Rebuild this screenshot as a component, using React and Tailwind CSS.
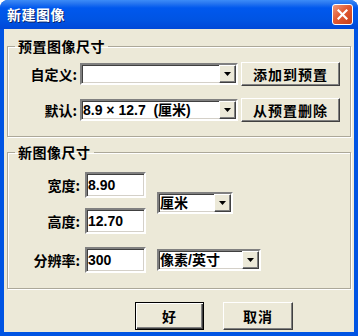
const cjk = { fontFamily: '"Noto Sans CJK SC", "Liberation Sans", sans-serif' };
const latin = { fontFamily: '"Liberation Sans", "Noto Sans CJK SC", sans-serif' };

const sunken =
  'border-2 border-t-[#808080] border-l-[#808080] border-b-white border-r-white shadow-[inset_1px_1px_0_#404040,inset_-1px_-1px_0_#D4D0C8] bg-white';
const raised =
  'border border-t-white border-l-white border-b-[#404040] border-r-[#404040] shadow-[inset_-1px_-1px_0_#808080] bg-[#ECE9D8]';

const Arrow = () => (
  <div className={`w-[17px] h-full flex items-center justify-center ${raised}`}>
    <svg width="7" height="4" viewBox="0 0 7 4">
      <path d="M0 0h7L3.5 4z" fill="#000" />
    </svg>
  </div>
);

const Combo = ({ w, text }) => (
  <div className={`${sunken} h-[22px] flex items-stretch`} style={{ width: w }}>
    <div className="flex-1 flex items-center pl-[1px] text-[14px] font-bold text-black whitespace-pre overflow-hidden" style={latin}>
      {text}
    </div>
    <Arrow />
  </div>
);

const Button = ({ children, w, h, def }) => (
  <button
    className={`flex items-center justify-center text-[14px] font-bold tracking-[1px] text-black ${
      def
        ? 'border border-black bg-[#ECE9D8] shadow-[inset_1px_1px_0_#fff,inset_-1px_-1px_0_#404040,inset_-2px_-2px_0_#808080]'
        : raised
    }`}
    style={{ width: w, height: h, ...cjk }}
  >
    {children}
  </button>
);

const Group = ({ title, children, className }) => (
  <fieldset className={`border border-[#ACA899] shadow-[inset_1px_1px_0_#fff,1px_1px_0_#fff] ${className}`}>
    <legend className="ml-[7px] px-[3px] text-[14px] leading-[18px] font-bold tracking-[0.5px] text-black" style={cjk}>
      {title}
    </legend>
    {children}
  </fieldset>
);

const Field = ({ label, value }) => (
  <div className="flex items-center">
    <span className="w-[77px] pr-[5px] text-right text-[14px] font-bold text-black" style={cjk}>
      {label}
    </span>
    <div className={`${sunken} w-[61px] h-[26px] flex items-center pl-[1px] text-[14px] font-bold text-black`} style={latin}>
      {value}
    </div>
  </div>
);

export default function App() {
  return (
    <div className="w-[358px] h-[336px] flex flex-col rounded-t-[8px] overflow-hidden bg-[#0054E3]">
      <div className="h-[29px] flex items-center justify-between pl-[7px] pr-[5px] bg-[linear-gradient(180deg,#3C8CF8_0px,#2A78F0_3px,#0058EE_8px,#0054E3_20px,#0048D8_29px)]">
        <span className="text-[14px] font-bold text-white tracking-[0.5px] [text-shadow:1px_1px_0_#0A246A]" style={cjk}>
          新建图像
        </span>
        <div className="w-[21px] h-[21px] rounded-[3px] border border-white bg-[linear-gradient(135deg,#F09A7C,#E25A33_45%,#C8401A)] flex items-center justify-center">
          <svg width="11" height="11" viewBox="0 0 11 11">
            <path d="M1.5 1.5l8 8M9.5 1.5l-8 8" stroke="#fff" strokeWidth="2.2" strokeLinecap="square" />
          </svg>
        </div>
      </div>

      <div className="flex-1 mx-[4px] mb-[4px] bg-[#ECE9D8] flex flex-col px-[3px]">
        <Group title="预置图像尺寸" className="mt-[8px] pt-[7px] pb-[14px]">
          <div className="flex flex-col gap-[12px]">
            <div className="flex items-center">
              <span className="w-[70px] pr-[1px] text-right text-[14px] font-bold text-black" style={cjk}>
                自定义:
              </span>
              <div className="ml-[2px]"><Combo w={158} text="" /></div>
              <div className="ml-[3px]"><Button w={99} h={24}>添加到预置</Button></div>
            </div>
            <div className="flex items-center">
              <span className="w-[70px] pr-[1px] text-right text-[14px] font-bold text-black" style={cjk}>
                默认:
              </span>
              <div className="ml-[2px]"><Combo w={158} text="8.9 × 12.7  (厘米)" /></div>
              <div className="ml-[3px]"><Button w={99} h={24}>从预置删除</Button></div>
            </div>
          </div>
        </Group>

        <Group title="新图像尺寸" className="mt-[6px] pt-[11px] pb-[15px]">
          <div className="flex">
            <div className="flex flex-col gap-[10px]">
              <Field label="宽度:" value="8.90" />
              <Field label="高度:" value="12.70" />
            </div>
            <div className="flex items-center ml-[11px]">
              <Combo w={76} text="厘米" />
            </div>
          </div>
          <div className="flex items-center mt-[13px]">
            <Field label="分辨率:" value="300" />
            <div className="ml-[11px]"><Combo w={104} text="像素/英寸" /></div>
          </div>
        </Group>

        <div className="flex mt-[13px] pl-[128px] gap-[19px]">
          <Button w={69} h={28} def>好</Button>
          <Button w={70} h={28}>取消</Button>
        </div>
      </div>
    </div>
  );
}
